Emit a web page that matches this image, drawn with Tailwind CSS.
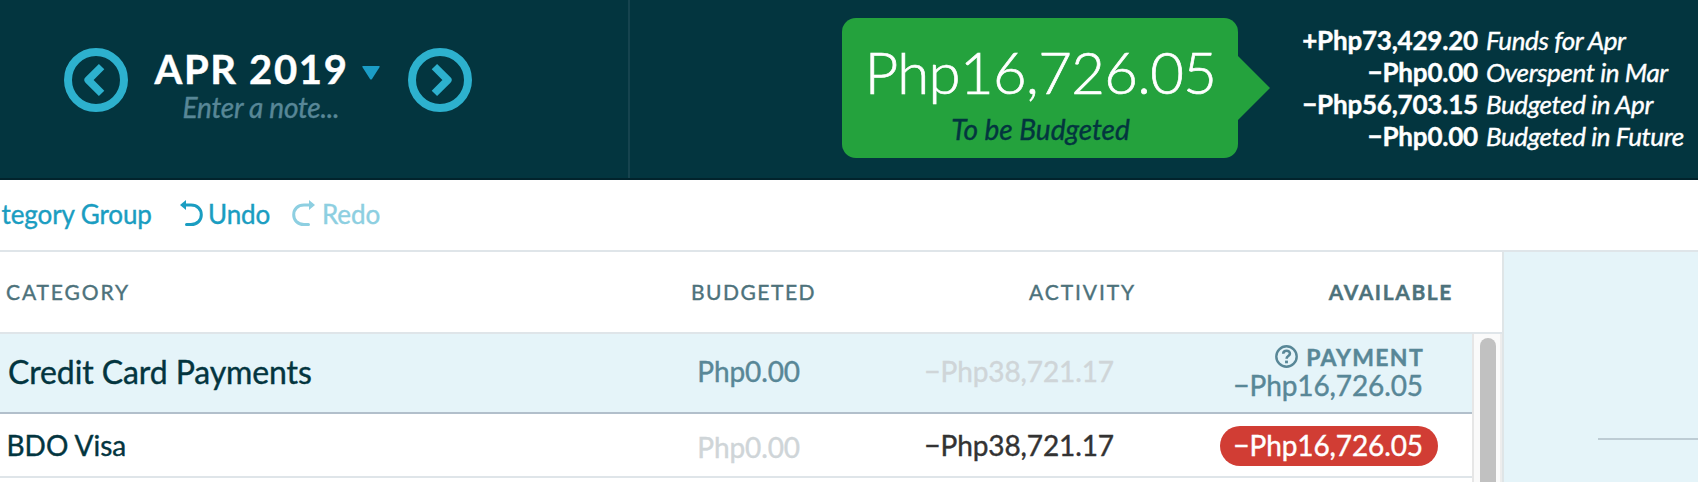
<!DOCTYPE html>
<html lang="en">
<head>
    <meta charset="UTF-8">
    <meta name="viewport" content="width=device-width, initial-scale=1.0">
    <title>Budget - Apr 2019</title>
    <script src="https://cdn.jsdelivr.net/npm/@tailwindcss/browser@4"></script>
</head>
<body class="w-[1698px] h-[482px] overflow-hidden bg-white font-['Lato',sans-serif] [-webkit-text-stroke:0.4px]">

    <!-- Budget header -->
    <header class="flex h-[180px] bg-[#03353f] border-b-2 border-[#02232c]">
        <div class="flex w-[630px] pl-16 border-r-2 border-[#16434e]">
            <svg class="w-16 h-16 mt-12 shrink-0" viewBox="0 0 64 64" fill="none" stroke="#2db1ce">
                <circle cx="32" cy="32" r="28" stroke-width="8"/>
                <path d="M37.6 18.6 L24.2 32 L37.6 45.4" stroke-width="7.6" stroke-linejoin="round"/>
            </svg>
            <div class="w-[226px] ml-[26px] pt-[45px] shrink-0">
                <div class="flex items-center h-12">
                    <h1 class="text-[40px] leading-[48px] font-bold text-white tracking-[1.65px] whitespace-nowrap w-[208px] pl-[0.5px] shrink-0">APR 2019</h1>
                    <svg class="w-[18px] h-[14px] mt-[7px] shrink-0" viewBox="0 0 18 14" fill="#1b9dc6">
                        <path d="M1 0 H17 Q18.2 .2 17.5 1.2 L10 13 Q9 14.2 8 13 L.5 1.2 Q-.2 .2 1 0Z"/>
                    </svg>
                </div>
                <p class="w-[214px] -mt-[2px] text-center text-[28px] leading-8 italic tracking-[-0.25px] text-[#588797]">Enter a note...</p>
            </div>
            <svg class="w-16 h-16 mt-12 ml-[27.5px] shrink-0" viewBox="0 0 64 64" fill="none" stroke="#2db1ce">
                <circle cx="32" cy="32" r="28" stroke-width="8"/>
                <path d="M26.4 18.6 L39.8 32 L26.4 45.4" stroke-width="7.6" stroke-linejoin="round"/>
            </svg>
        </div>

        <div class="flex pl-[212px] pt-[18px]">
            <div class="w-[396px] h-[140px] pt-[19px] rounded-[14px] bg-[#24a23d] text-center shrink-0">
                <div class="pl-[1px] text-[58px] leading-[70px] font-light tracking-[-0.6px] text-white whitespace-nowrap [-webkit-text-stroke:0.7px]">Php16,726.05</div>
                <div class="mt-[6px] pl-[1px] text-[28px] leading-8 italic text-[#03353f]">To be Budgeted</div>
            </div>
            <svg class="w-8 h-16 mt-[38px] shrink-0" viewBox="0 0 32 64" fill="#24a23d"><path d="M0 0 L32 32 L0 64Z"/></svg>
            <div class="grid grid-cols-[208px_auto] gap-x-2 auto-rows-[32px] mt-[6px] text-[26px] leading-8 tracking-[-0.4px] text-white whitespace-nowrap content-start">
                <span class="text-right font-bold tracking-[-0.2px]">+Php73,429.20</span><em>Funds for Apr</em>
                <span class="text-right font-bold tracking-[-0.2px]">−Php0.00</span><em>Overspent in Mar</em>
                <span class="text-right font-bold tracking-[-0.2px]">−Php56,703.15</span><em>Budgeted in Apr</em>
                <span class="text-right font-bold tracking-[-0.2px]">−Php0.00</span><em>Budgeted in Future</em>
            </div>
        </div>
    </header>

    <!-- Toolbar -->
    <nav class="flex h-[72px] pt-[18px] border-b-2 border-[#dfe5e9] text-[26px] leading-8 tracking-[-0.1px] text-[#1a9dc1] whitespace-nowrap">
        <span class="w-[180px] pl-[1.5px]">tegory Group</span>
        <svg class="w-[23px] h-[27px] mt-[2px] mr-[5px]" viewBox="0 0 23 27" fill="none">
            <path d="M5 5 H11 C17.5 5 21.3 9.4 21.3 14.7 C21.3 20 17.5 24.5 11 24.5 H6.5" stroke="#1a9dc1" stroke-width="3" stroke-linecap="round"/>
            <path d="M0 5 L6 0 V10Z" fill="#1a9dc1"/>
        </svg>
        <span class="w-[84px]">Undo</span>
        <svg class="w-[23px] h-[27px] mt-[2px] mr-[7px]" viewBox="0 0 23 27" fill="none">
            <path d="M17.5 5 H12 C5.5 5 1.7 9.4 1.7 14.7 C1.7 20 5.5 24.5 12 24.5 H16.5" stroke="#8dcfe1" stroke-width="3" stroke-linecap="round"/>
            <path d="M23 5 L17 0 V10Z" fill="#8dcfe1"/>
        </svg>
        <span class="text-[#8dcfe1]">Redo</span>
    </nav>

    <div class="flex h-[230px]">
        <!-- Budget table -->
        <main class="w-[1504px] border-r-2 border-[#dfe5e7] shrink-0">
            <div class="flex items-center h-[82px] border-b-2 border-[#dfe5e9] text-[21px] leading-7 text-[#4d727b]">
                <span class="w-[400px] pl-[6px] tracking-[1.9px]">CATEGORY</span>
                <span class="w-[416px] text-right tracking-[1.5px]">BUDGETED</span>
                <span class="w-[320px] text-right tracking-[1.9px]">ACTIVITY</span>
                <span class="w-[317px] text-right font-bold tracking-[1.6px]">AVAILABLE</span>
            </div>
            <div class="flex h-[148px]">
                <div class="w-[1474px] border-r-2 border-[#e6e6e6] text-[28px] leading-8 tracking-[-0.1px] text-right whitespace-nowrap">
                    <div class="flex h-20 bg-[#e5f4f9] border-b-2 border-[#b2bfcb]">
                        <span class="w-[400px] pl-2 pt-[18px] text-left text-[32px] leading-10 text-[#03353f]">Credit Card Payments</span>
                        <span class="w-[400px] pt-[21px] text-[#588797]">Php0.00</span>
                        <span class="w-[314px] pt-[21px] text-[#cfd5d8]">−Php38,721.17</span>
                        <div class="w-[309px] pt-[8px] text-[#588797]">
                            <div class="flex justify-end items-center h-[30px]">
                                <svg class="w-[23px] h-[23px] mr-2 mb-[1px]" viewBox="0 0 23 23" fill="none" stroke="#588797">
                                    <circle cx="11.5" cy="11.5" r="10.2" stroke-width="2.4"/>
                                    <path d="M8.2 8.7 C8.4 4.7 15 4.8 14.9 8.6 C14.8 11.2 11.6 11 11.6 13.8" stroke-width="2.6"/>
                                    <path d="M11.5 15.6 V18.3" stroke-width="2.9"/>
                                </svg>
                                <span class="text-[23px] leading-[30px] font-bold tracking-[1.3px] -mr-[1px]">PAYMENT</span>
                            </div>
                            <div class="-mt-[3px]">−Php16,726.05</div>
                        </div>
                    </div>
                    <div class="flex h-16 border-b-2 border-[#dfe5e9]">
                        <span class="w-[400px] pl-[6.5px] pt-[15px] text-left tracking-normal text-[#03353f]">BDO Visa</span>
                        <span class="w-[400px] pt-[17px] text-[#cfd5d8]">Php0.00</span>
                        <span class="w-[314px] pt-[15px] text-[#333333]">−Php38,721.17</span>
                        <div class="flex justify-end w-[324px] pt-3">
                            <span class="w-[218px] h-10 pr-[15px] pt-[3px] rounded-full bg-[#d13d34] text-white">−Php16,726.05</span>
                        </div>
                    </div>
                </div>
                <!-- Scrollbar -->
                <div class="w-7 pt-1 pl-[6px] bg-[#fafafa] border-r-2 border-[#ededed]">
                    <div class="w-4 h-[160px] rounded-t-full bg-[#c1c1c1]"></div>
                </div>
            </div>
        </main>

        <!-- Inspector -->
        <aside class="grow bg-[#e5f4f9] pt-[186px] pl-[94px]">
            <div class="h-[2px] bg-[#bdccd4]"></div>
        </aside>
    </div>

</body>
</html>
